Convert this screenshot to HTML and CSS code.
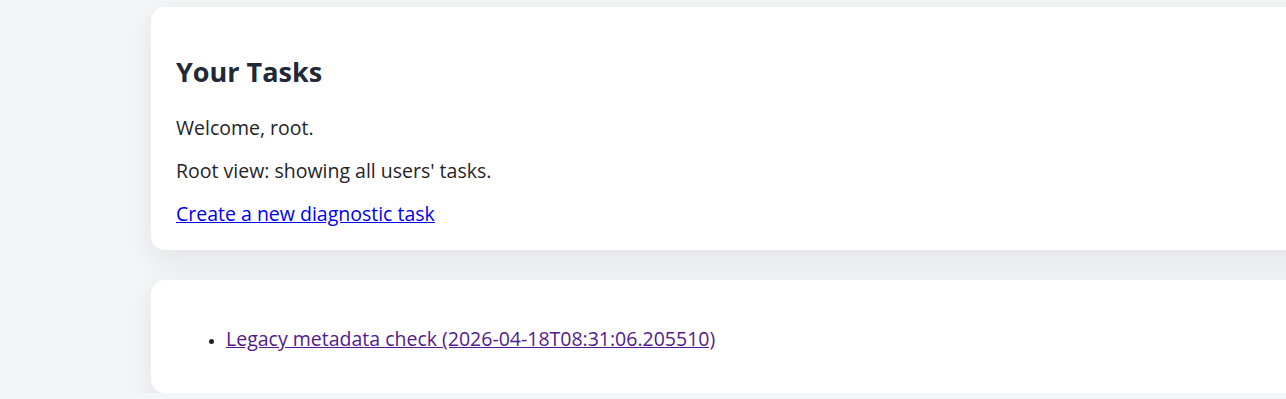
FILE: index.html
```html
<!DOCTYPE html>
<html lang="en">
<head>
<meta charset="utf-8">
<title>Your Tasks</title>
<link rel="stylesheet" href="styles.css">
</head>
<body>
<main class="page">
  <section class="card intro">
    <h2 class="title">Your Tasks</h2>
    <p class="text">Welcome, root.</p>
    <p class="text">Root view: showing all users' tasks.</p>
    <p class="text"><a class="link" href="#new">Create a new diagnostic task</a></p>
  </section>
  <section class="card list">
    <ul class="tasks">
      <li><a class="link visited" href="#task">Legacy metadata check (2026-04-18T08:31:06.205510)</a></li>
    </ul>
  </section>
</main>
</body>
</html>
```

FILE: styles.css
```css
html, body {
  margin: 0;
  padding: 0;
  background: #f4f5f7;
  overflow: hidden;
}
body {
  font-family: "Open Sans", sans-serif;
  font-size: 19.5px;
  color: #1f2328;
}
.page {
  display: flex;
  flex-direction: column;
  gap: 30px;
  padding: 7px 0 0 151px;
  width: 1300px;
}
.card {
  background: #fff;
  border-radius: 14px;
  box-shadow: 0 10px 30px rgba(15, 23, 42, 0.08);
}
.intro {
  padding: 48px 25px 23px;
}
.list {
  padding: 46px 25px 41px;
}
.title {
  font-size: 27px;
  line-height: 34px;
  font-weight: 700;
  color: #1f2937;
  margin: 0 0 26px;
}
.text {
  margin: 17px 0 0;
  line-height: 26px;
}
.title + .text {
  margin-top: 0;
}
.link {
  color: #0000ee;
}
.link.visited {
  color: #551a8b;
}
.tasks {
  margin: 0;
  padding-left: 50px;
  line-height: 26px;
}
.tasks li::marker {
  font-size: 15px;
}
```
